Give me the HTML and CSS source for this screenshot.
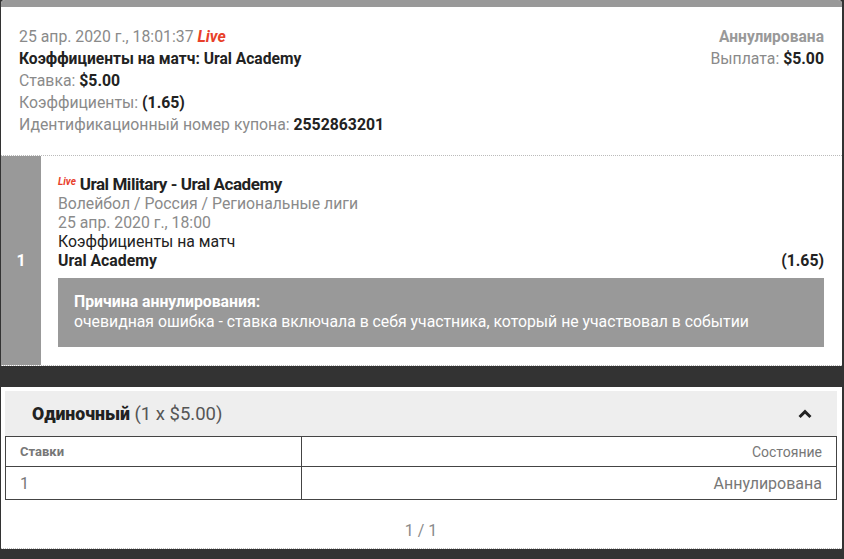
FILE: index.html
```html
<!DOCTYPE html>
<html lang="ru">
<head>
  <meta charset="UTF-8">
  <meta name="viewport" content="width=device-width, initial-scale=1.0">
  <title>Купон 2552863201</title>
  <link rel="stylesheet" href="styles.css">
</head>
<body>
  <main class="page">
    <section class="coupon">
      <div class="coupon-top"></div>
      <div class="coupon-summary">
        <div class="summary-left">
          <p class="muted">25 апр. 2020 г., 18:01:37 <span class="live">Live</span></p>
          <p class="strong">Коэффициенты на матч: Ural Academy</p>
          <p class="muted">Ставка: <b class="dark">$5.00</b></p>
          <p class="muted">Коэффициенты: <b class="dark">(1.65)</b></p>
          <p class="muted">Идентификационный номер купона: <b class="dark">2552863201</b></p>
        </div>
        <div class="summary-right">
          <p class="status">Аннулирована</p>
          <p class="muted">Выплата: <b class="dark">$5.00</b></p>
        </div>
      </div>
      <div class="selection">
        <div class="selection-num">1</div>
        <div class="selection-body">
          <h3 class="event"><span class="live live-small">Live</span> Ural Military - Ural Academy</h3>
          <p class="muted">Волейбол / Россия / Региональные лиги</p>
          <p class="muted">25 апр. 2020 г., 18:00</p>
          <p>Коэффициенты на матч</p>
          <p class="pick"><b>Ural Academy</b><b>(1.65)</b></p>
          <div class="void-reason">
            <b>Причина аннулирования:</b>
            <p>очевидная ошибка - ставка включала в себя участника, который не участвовал в событии</p>
          </div>
        </div>
      </div>
    </section>

    <section class="bets">
      <div class="bets-head">
        <h3><b>Одиночный</b> <span>(1 x $5.00)</span></h3>
        <svg class="chevron" width="14" height="10" viewBox="0 0 14 10">
          <path d="M7 0.5 L13.5 7 L11.4 9.1 L7 4.7 L2.6 9.1 L0.5 7 Z" fill="#222"/>
        </svg>
      </div>
      <table class="bets-table">
        <tr>
          <th>Ставки</th>
          <th class="right">Состояние</th>
        </tr>
        <tr>
          <td>1</td>
          <td class="right">Аннулирована</td>
        </tr>
      </table>
      <div class="pager">1 / 1</div>
    </section>
  </main>
</body>
</html>
```

FILE: styles.css
```css
:root {
  --main-font: Roboto, "Liberation Sans", sans-serif;
  --bg-color: #333333;
  --gray-color: #999999;
  --muted-color: #8a8a8a;
  --text-color: #222222;
  --live-color: #e8402a;
  --head-color: #eeeeee;
}

html {
  box-sizing: border-box;
  font-family: var(--main-font);
  font-size: 15.8px;
}

*,
*::before,
*::after {
  box-sizing: inherit;
}

body {
  margin: 0;
  background-color: var(--bg-color);
  color: var(--text-color);
}

p {
  margin: 0;
}

.page {
  padding: 0 2px 0 1px;
}

.coupon {
  background-color: white;
  border-radius: 4px 4px 0 0;
  overflow: hidden;
  border-bottom: 1px dotted #bbb;
}

.coupon-top {
  height: 7px;
  background-color: var(--gray-color);
}

.coupon-summary {
  display: flex;
  justify-content: space-between;
  padding: 19px 18px 19px 18px;
  line-height: 22px;
  border-bottom: 1px dotted #bbb;
}

.summary-right {
  text-align: right;
}

.muted {
  color: var(--muted-color);
}

.dark {
  color: var(--text-color);
}

.strong {
  font-weight: bold;
  font-size: 15.6px;
}

.status {
  font-weight: bold;
  color: var(--gray-color);
  font-size: 15.6px;
}

.live {
  color: var(--live-color);
  font-style: italic;
  font-weight: bold;
}

.live-small {
  font-size: 10px;
  vertical-align: 5px;
  letter-spacing: 0;
}

.selection {
  display: flex;
}

.selection-num {
  width: 40px;
  flex: none;
  background-color: var(--gray-color);
  color: white;
  font-weight: bold;
  font-size: 16px;
  display: flex;
  align-items: center;
  justify-content: center;
}

.selection-body {
  flex: 1;
  padding: 16px 18px 18px 17px;
  line-height: 19px;
}

.event {
  margin: 0;
  font-size: 17px;
  line-height: 20px;
  letter-spacing: -0.45px;
}

.pick {
  display: flex;
  justify-content: space-between;
}

.void-reason {
  margin-top: 8px;
  background-color: var(--gray-color);
  color: white;
  padding: 14px 16px 15px;
  line-height: 20px;
}

.bets {
  margin-top: 21px;
  background-color: white;
  padding: 4px 5px 0 4px;
  border-bottom: 1px dotted #bbb;
}

.bets-head {
  display: flex;
  justify-content: space-between;
  align-items: center;
  height: 45px;
  padding: 0 25px 0 27px;
  background-color: var(--head-color);
}

.bets-head h3 {
  margin: 0;
  font-size: 17.7px;
  color: var(--text-color);
}

.bets-head h3 span {
  font-weight: normal;
  font-size: 18.5px;
  color: #555;
}

.bets-table {
  width: 100%;
  border-collapse: collapse;
  color: #777;
}

.bets-table th,
.bets-table td {
  border: 1px solid #444;
  text-align: left;
  padding: 0 14px 0 14px;
}

.bets-table th {
  height: 30px;
  font-size: 13px;
}

.bets-table th.right {
  font-weight: normal;
  font-size: 14px;
}

.bets-table td {
  height: 33px;
  font-size: 16px;
}

.bets-table td:first-child,
.bets-table th:first-child {
  width: 296px;
}

.bets-table .right {
  text-align: right;
}

.pager {
  height: 48px;
  padding-top: 21px;
  text-align: center;
  color: var(--muted-color);
  font-size: 16px;
}
```
